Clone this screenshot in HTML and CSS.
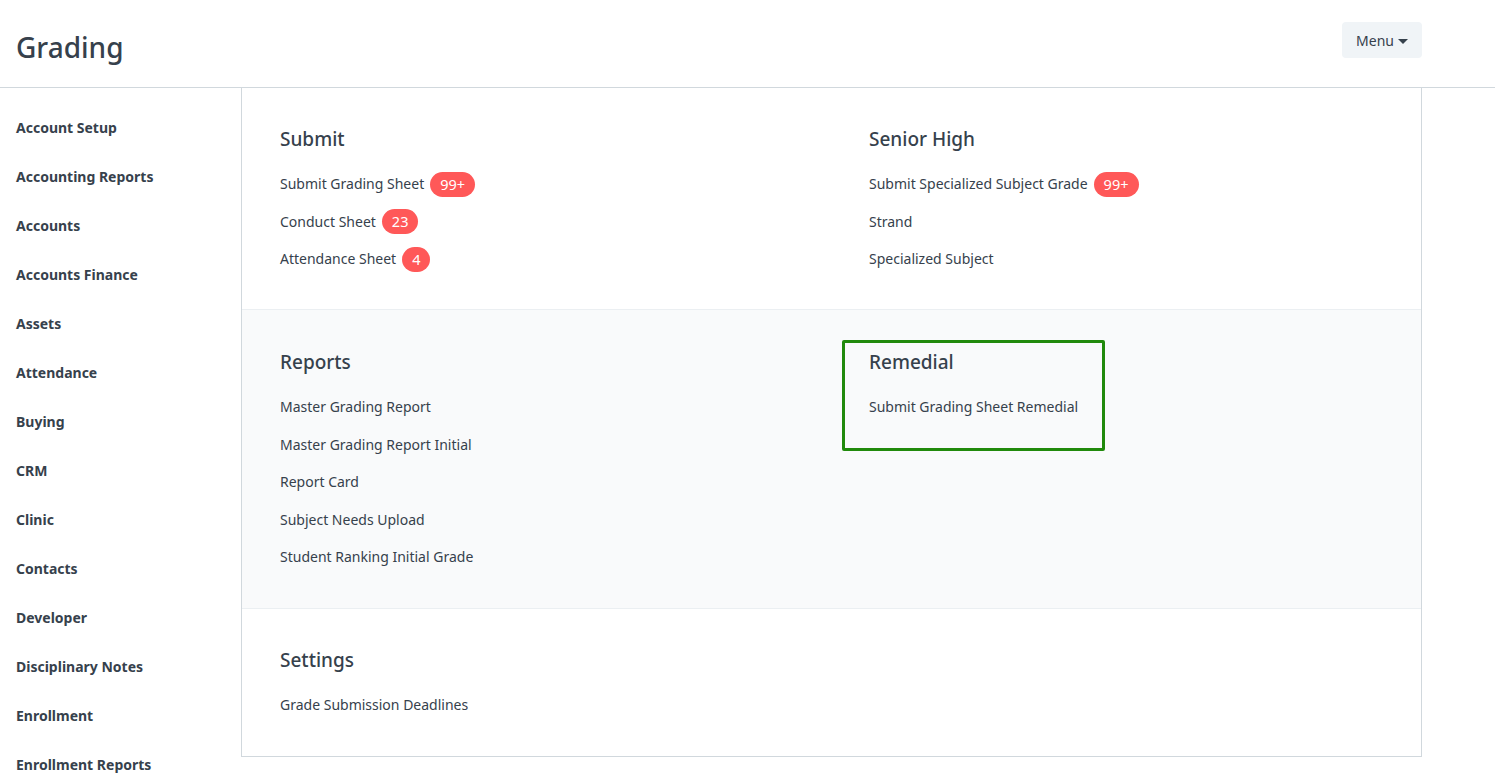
FILE: index.html
```html
<!DOCTYPE html>
<html>
<head>
<meta charset="utf-8">
<link rel="stylesheet" href="styles.css">
</head>
<body>
<header class="page-head">
  <h1 class="title">Grading</h1>
  <button class="menu-btn">Menu <span class="caret"></span></button>
</header>
<div class="layout">
  <nav class="sidebar">
    <div class="side-item">Account Setup</div>
    <div class="side-item">Accounting Reports</div>
    <div class="side-item">Accounts</div>
    <div class="side-item">Accounts Finance</div>
    <div class="side-item">Assets</div>
    <div class="side-item">Attendance</div>
    <div class="side-item">Buying</div>
    <div class="side-item">CRM</div>
    <div class="side-item">Clinic</div>
    <div class="side-item">Contacts</div>
    <div class="side-item">Developer</div>
    <div class="side-item">Disciplinary Notes</div>
    <div class="side-item">Enrollment</div>
    <div class="side-item">Enrollment Reports</div>
  </nav>
  <main class="content">
    <section class="section first">
      <div class="col">
        <h3 class="sec-title">Submit</h3>
        <div class="links">
          <div class="link">Submit Grading Sheet <span class="badge">99+</span></div>
          <div class="link">Conduct Sheet <span class="badge">23</span></div>
          <div class="link">Attendance Sheet <span class="badge">4</span></div>
        </div>
      </div>
      <div class="col">
        <h3 class="sec-title">Senior High</h3>
        <div class="links">
          <div class="link">Submit Specialized Subject Grade <span class="badge">99+</span></div>
          <div class="link">Strand</div>
          <div class="link">Specialized Subject</div>
        </div>
      </div>
    </section>
    <section class="section shaded">
      <div class="col">
        <h3 class="sec-title">Reports</h3>
        <div class="links">
          <div class="link">Master Grading Report</div>
          <div class="link">Master Grading Report Initial</div>
          <div class="link">Report Card</div>
          <div class="link">Subject Needs Upload</div>
          <div class="link">Student Ranking Initial Grade</div>
        </div>
      </div>
      <div class="col">
        <div class="highlight"></div>
        <h3 class="sec-title">Remedial</h3>
        <div class="links">
          <div class="link">Submit Grading Sheet Remedial</div>
        </div>
      </div>
    </section>
    <section class="section last">
      <div class="col">
        <h3 class="sec-title">Settings</h3>
        <div class="links">
          <div class="link">Grade Submission Deadlines</div>
        </div>
      </div>
    </section>
  </main>
</div>
</body>
</html>
```
FILE: styles.css
```css
html, body {
  margin: 0;
  padding: 0;
  background: #ffffff;
}
body {
  font-family: "Noto Sans", "Open Sans", sans-serif;
  color: #36414c;
  font-size: 14px;
  overflow: hidden;
}
.page-head {
  height: 87px;
  border-bottom: 1px solid #d1d8dd;
  display: flex;
  align-items: center;
  justify-content: space-between;
  padding: 0 73px 0 16px;
  box-sizing: content-box;
}
.title {
  margin: 0;
  font-size: 28px;
  font-weight: 500;
  color: #36414c;
  line-height: 36px;
  margin-top: 6px;
}
.menu-btn {
  width: 80px;
  height: 36px;
  background: #f0f4f7;
  border: none;
  border-radius: 4px;
  font-family: inherit;
  font-size: 14px;
  color: #36414c;
  display: flex;
  align-items: center;
  justify-content: center;
  gap: 4px;
  padding: 0;
  margin-top: -7px;
}
.caret {
  width: 0;
  height: 0;
  border-left: 5px solid transparent;
  border-right: 5px solid transparent;
  border-top: 5px solid #36414c;
  margin-top: 2px;
}
.layout {
  display: flex;
  align-items: flex-start;
}
.sidebar {
  width: 241px;
  flex: none;
  padding: 15px 0 0 16px;
  box-sizing: border-box;
}
.side-item {
  height: 49px;
  line-height: 49px;
  font-weight: 700;
  font-size: 14px;
  white-space: nowrap;
}
.content {
  width: 1181px;
  flex: none;
  border-left: 1px solid #d1d8dd;
  border-right: 1px solid #d1d8dd;
  border-bottom: 1px solid #d1d8dd;
  box-sizing: border-box;
}
.section {
  display: grid;
  grid-template-columns: 589px 1fr;
  padding: 37px 38px 39px;
  border-bottom: 1px solid #ebeff2;
}
.section.first {
  padding-bottom: 38px;
}
.section.shaded {
  padding-top: 38px;
  background: #f9fafb;
}
.section.last {
  border-bottom: none;
}
.col {
  position: relative;
}
.sec-title {
  margin: 0;
  font-size: 19px;
  font-weight: 500;
  line-height: 28px;
  color: #36414c;
}
.links {
  margin-top: 19px;
  display: flex;
  flex-direction: column;
  gap: 13.5px;
}
.link {
  height: 24px;
  line-height: 24px;
  display: flex;
  align-items: center;
  white-space: nowrap;
}
.badge {
  display: inline-block;
  height: 25px;
  line-height: 25px;
  padding: 0 10px;
  border-radius: 13px;
  background: #ff5858;
  color: #ffffff;
  font-size: 14.5px;
  margin-left: 6px;
}
.highlight {
  position: absolute;
  top: -8px;
  left: -27px;
  width: 263px;
  height: 111px;
  border: 3px solid #218a0c;
  border-radius: 2px;
  box-sizing: border-box;
}
```
